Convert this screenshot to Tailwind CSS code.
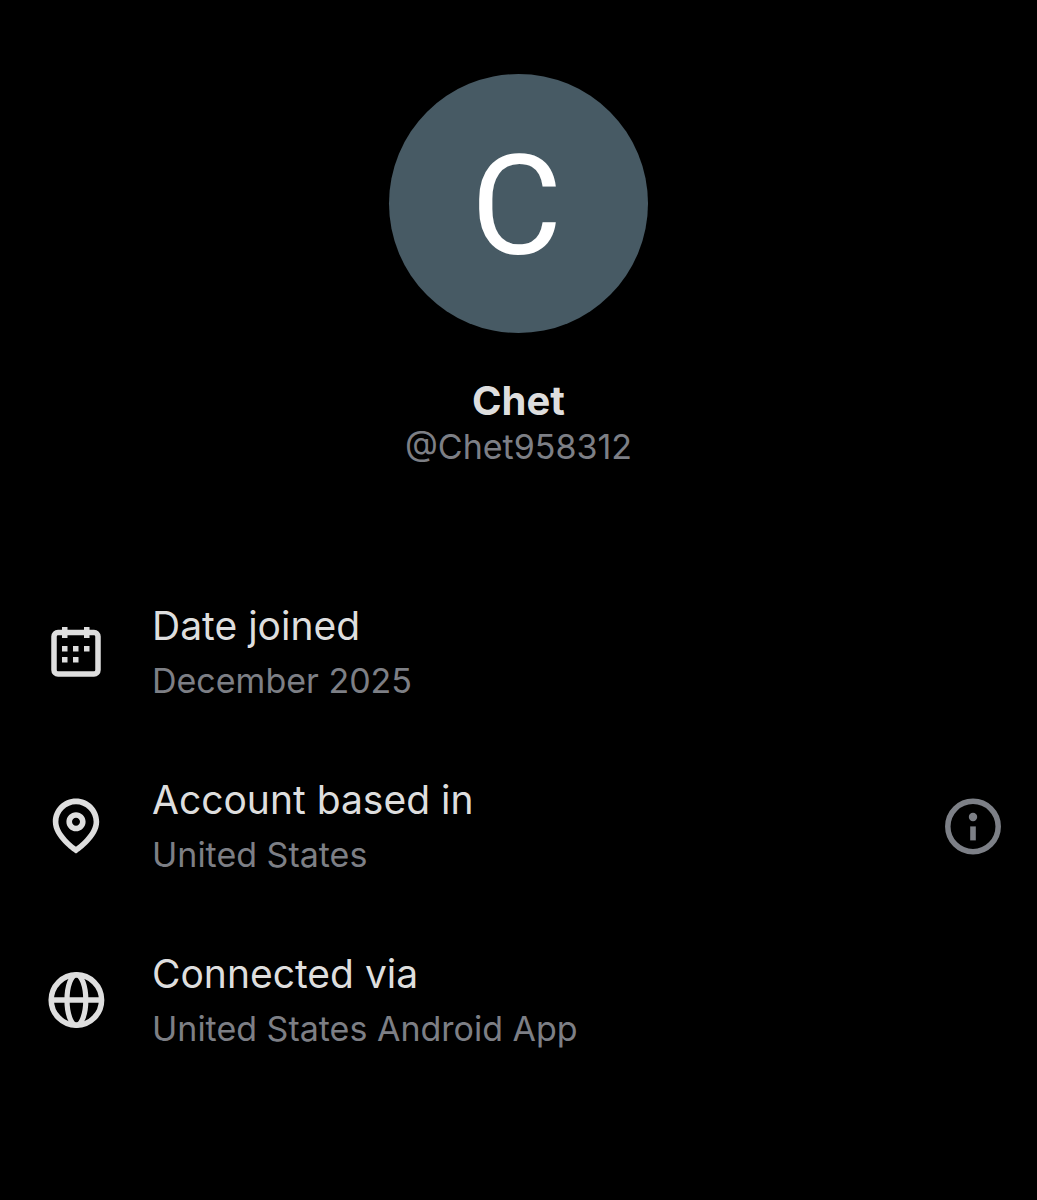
<!DOCTYPE html>
<html lang="en">
<head>
    <meta charset="UTF-8">
    <meta name="viewport" content="width=device-width, initial-scale=1.0">
    <title>About this account</title>
    <script src="https://cdn.jsdelivr.net/npm/@tailwindcss/browser@4"></script>
</head>
<body class="min-h-screen bg-black font-['Inter',sans-serif] text-[#dedede]">
    <main class="pt-[74px] pb-16">
        <!-- Profile -->
        <header class="flex flex-col items-center">
            <div class="flex size-[259px] items-center justify-center rounded-full bg-[#475a64] pt-1 pr-1 font-['Roboto',sans-serif] text-[140px] leading-none text-white">C</div>
            <h1 class="mt-11 text-[40px] leading-12 font-bold">Chet</h1>
            <p class="text-[34px] leading-11 text-[#7d7f85]">@Chet958312</p>
        </header>

        <!-- Account details -->
        <ul class="mt-24 pr-8 pl-11">
            <li class="flex h-[174px] items-center gap-11">
                <svg class="size-16 shrink-0" viewBox="0 0 64 64" fill="currentColor" aria-hidden="true">
                    <rect x="10" y="12.4" width="44" height="41.6" rx="4" fill="none" stroke="currentColor" stroke-width="5.5"/>
                    <path d="M18 7h5.5v11H18zM40 7h5.5v11H40zM18 26h5.5v5.5H18zM29 26h5.5v5.5H29zM40 26h5.5v5.5H40zM18 37h5.5v5.5H18zM29 37h5.5v5.5H29z"/>
                </svg>
                <div class="grow pt-0.5">
                    <h2 class="text-[39px] leading-14">Date joined</h2>
                    <p class="text-[34px] leading-[54px] text-[#7d7f85]">December 2025</p>
                </div>
            </li>
            <li class="flex h-[174px] items-center gap-11">
                <svg class="size-16 shrink-0" viewBox="0 0 24 24" fill="currentColor" aria-hidden="true">
                    <path d="M12 6.8c-1.98 0-3.6 1.62-3.6 3.6S10.02 14 12 14s3.6-1.62 3.6-3.6S13.98 6.8 12 6.8zm0 5.1c-.83 0-1.5-.67-1.5-1.5s.67-1.5 1.5-1.5 1.5.67 1.5 1.5-.67 1.5-1.5 1.5zM12 1.7c-4.8 0-8.7 3.9-8.7 8.7 0 6 7.7 11.2 8.1 11.5l.6.4.6-.4c.4-.3 8.1-5.5 8.1-11.5 0-4.8-3.9-8.7-8.7-8.7zm0 18.1c-1.7-1.3-6.6-5.3-6.6-9.4 0-3.6 3-6.6 6.6-6.6s6.6 3 6.6 6.6c0 4.1-4.9 8.1-6.6 9.4z"/>
                </svg>
                <div class="grow pt-0.5">
                    <h2 class="text-[39px] leading-14">Account based in</h2>
                    <p class="text-[34px] leading-[54px] text-[#7d7f85]">United States</p>
                </div>
                <button type="button" aria-label="More information" class="shrink-0 text-[#7d8087]">
                    <svg class="size-16" viewBox="0 0 64 64" fill="currentColor" aria-hidden="true">
                        <circle cx="32" cy="32.5" r="25.2" fill="none" stroke="currentColor" stroke-width="5.5"/>
                        <circle cx="32" cy="23" r="4.2"/>
                        <path d="M29.2 32.4h5.6v14h-5.6z"/>
                    </svg>
                </button>
            </li>
            <li class="flex h-[174px] items-center gap-11">
                <svg class="size-16 shrink-0" viewBox="0 0 64 64" fill="none" stroke="currentColor" stroke-width="5.5" aria-hidden="true">
                    <circle cx="32.4" cy="32" r="25.2"/>
                    <ellipse cx="32.4" cy="32" rx="9.4" ry="25.2" stroke-width="5.2"/>
                    <path d="M6 32h52"/>
                </svg>
                <div class="grow pt-0.5">
                    <h2 class="text-[39px] leading-14">Connected via</h2>
                    <p class="text-[34px] leading-[54px] text-[#7d7f85]">United States Android App</p>
                </div>
            </li>
        </ul>
    </main>
</body>
</html>
